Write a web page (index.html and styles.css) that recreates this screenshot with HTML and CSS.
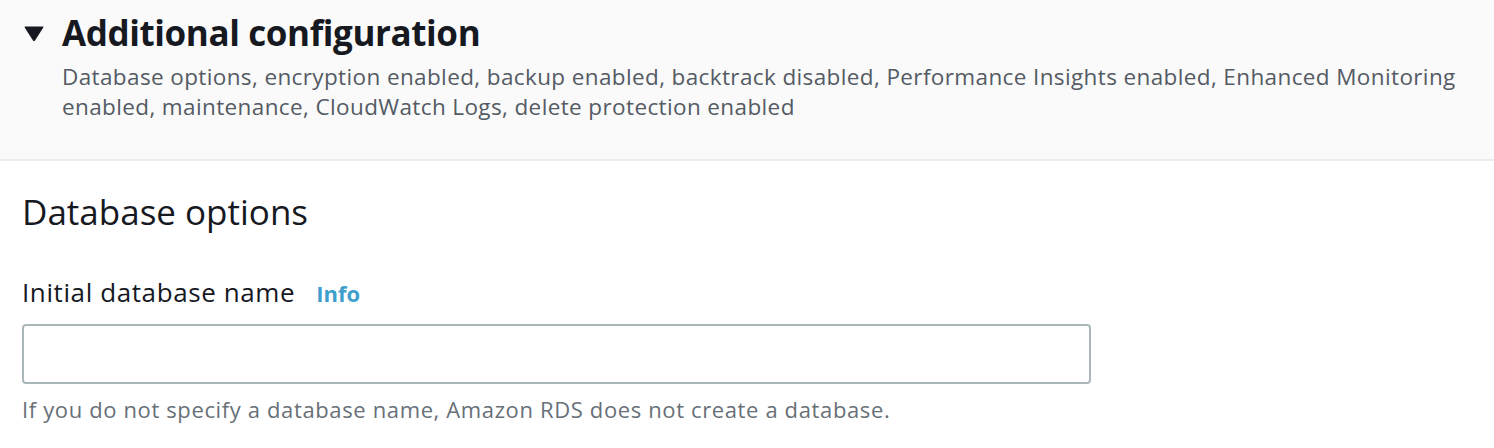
FILE: index.html
```html
<!DOCTYPE html>
<html>
<head>
<meta charset="utf-8">
<link rel="stylesheet" href="styles.css">
</head>
<body>
<div class="page">
  <div class="expander-header">
    <div class="caret-col">
      <svg class="caret" width="20" height="16" viewBox="0 0 20 16"><path d="M1.5 0.5 H18.5 Q20 0.5 19.2 1.8 L11 14.6 Q10 15.8 9 14.6 L0.8 1.8 Q0 0.5 1.5 0.5 Z" fill="#16191f"/></svg>
    </div>
    <div class="header-text">
      <div class="title">Additional configuration</div>
      <div class="desc">Database options, encryption enabled, backup enabled, backtrack disabled, Performance Insights enabled, Enhanced Monitoring enabled, maintenance, CloudWatch Logs, delete protection enabled</div>
    </div>
  </div>
  <div class="content">
    <h2 class="section-title">Database options</h2>
    <div class="field">
      <div class="label-row">
        <span class="label">Initial database name</span>
        <a class="info">Info</a>
      </div>
      <input class="text-input" type="text">
      <div class="hint">If you do not specify a database name, Amazon RDS does not create a database.</div>
    </div>
  </div>
</div>
</body>
</html>
```

FILE: styles.css
```css
html, body {
  margin: 0;
  padding: 0;
  background: #ffffff;
}
body {
  font-family: "Open Sans", "Noto Sans", sans-serif;
  color: #16191f;
}
.page {
  width: 1494px;
  height: 448px;
  overflow: hidden;
}
.expander-header {
  display: flex;
  background: #fafafa;
  border-bottom: 2px solid #eaeded;
  height: 161px;
  box-sizing: border-box;
  padding: 0 20px 0 24px;
}
.caret-col {
  width: 38px;
  flex: none;
  padding-top: 26px;
}
.caret {
  display: block;
}
.header-text {
  flex: 1;
  padding-top: 9px;
}
.title {
  font-size: 35px;
  font-weight: 700;
  line-height: 48px;
  letter-spacing: -0.4px;
}
.desc {
  font-size: 22.5px;
  line-height: 30px;
  color: #545b64;
  margin-top: 5px;
  letter-spacing: 0.38px;
}
.content {
  padding: 0 22px;
}
.section-title {
  font-size: 35px;
  font-weight: 400;
  line-height: 48px;
  margin: 0;
  padding-top: 27px;
}
.field {
  margin-top: 38px;
}
.label-row {
  display: flex;
  align-items: baseline;
  gap: 21px;
}
.label {
  font-size: 26px;
  line-height: 36px;
  letter-spacing: 0.6px;
}
.info {
  font-size: 22px;
  font-weight: 700;
  color: #3f9fcc;
}
.text-input {
  display: block;
  width: 1069px;
  height: 60px;
  box-sizing: border-box;
  border: 2px solid #aab7b8;
  border-radius: 4px;
  background: #fff;
  margin-top: 14px;
}
.hint {
  font-size: 22px;
  line-height: 30px;
  color: #687078;
  margin-top: 10px;
  letter-spacing: 0.63px;
}
```
